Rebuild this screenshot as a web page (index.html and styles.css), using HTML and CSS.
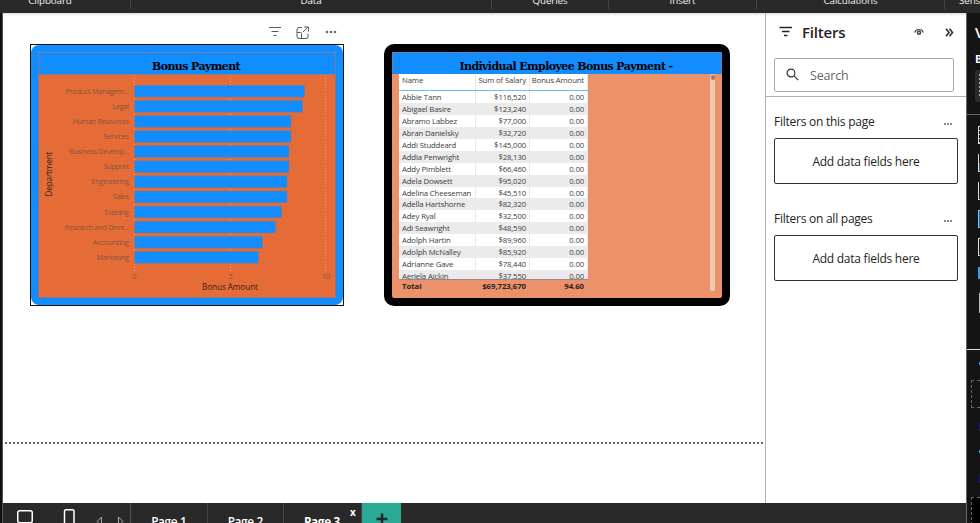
FILE: index.html
```html
<!DOCTYPE html>
<html lang="en">
<head>
<meta charset="utf-8">
<title>Report editor</title>
<link rel="stylesheet" href="styles.css">
</head>
<body>
<div class="app">
  <header class="ribbon">
    <span class="group clipboard">Clipboard</span><span class="group data">Data</span><span class="group queries">Queries</span><span class="group insert">Insert</span><span class="group calc">Calculations</span><span class="group sens">Sensitivity</span>
  </header>
  <div class="workspace">
    <div class="rail"></div>
    <div class="center">
      <div class="stage">
        <main class="canvas">
          <div class="visual-actions">
            <svg width="70" height="16" viewBox="0 0 70 16" fill="none" stroke="#5a5a5a">
              <path d="M1 3.5h12M3.5 7.5h7M5.5 11.5h3"/>
              <path d="M34 3.5h-3a2 2 0 0 0-2 2v7a2 2 0 0 0 2 2h7a2 2 0 0 0 2-2v-3M29 8.500h3.500a1 1 0 0 1 1 1v5M35 8l5-5M36 3h4.500v4.500"/>
              <g fill="#666" stroke="none"><circle cx="59" cy="8" r="1.300"/><circle cx="63" cy="8" r="1.300"/><circle cx="67" cy="8" r="1.300"/></g>
            </svg>
          </div>
          <div class="visuals">
            <section class="visual selected">
              <div class="card">
                <h2>Bonus Payment</h2>
                <svg class="chart" width="296" height="222" viewBox="39 75 296 222">
                  <g class="grid"><path d="M134.500 78V272M230.500 78V272M325.500 78V272"/></g>
                  <g class="bars">
                    <rect x="134.500" y="85.3" width="170" height="11.800"/>
                    <rect x="134.500" y="100.400" width="168" height="11.800"/>
                    <rect x="134.500" y="115.500" width="156.500" height="11.800"/>
                    <rect x="134.500" y="130.600" width="156.500" height="11.800"/>
                    <rect x="134.500" y="145.700" width="154.500" height="11.800"/>
                    <rect x="134.500" y="160.800" width="154.500" height="11.800"/>
                    <rect x="134.500" y="175.900" width="152.500" height="11.800"/>
                    <rect x="134.500" y="191" width="152.500" height="11.800"/>
                    <rect x="134.500" y="206.100" width="147" height="11.800"/>
                    <rect x="134.500" y="221.200" width="141" height="11.800"/>
                    <rect x="134.500" y="236.300" width="128" height="11.800"/>
                    <rect x="134.500" y="251.400" width="124" height="11.800"/>
                  </g>
                  <g class="labels">
                    <text x="129" y="94" textLength="63.500">Product Managem...</text>
                    <text x="129" y="109" textLength="16.500">Legal</text>
                    <text x="129" y="124" textLength="56.500">Human Resources</text>
                    <text x="129" y="139" textLength="25.500">Services</text>
                    <text x="129" y="154" textLength="60">Business Develop...</text>
                    <text x="129" y="169" textLength="25.500">Support</text>
                    <text x="129" y="184" textLength="37.500">Engineering</text>
                    <text x="129" y="199" textLength="16">Sales</text>
                    <text x="129" y="215" textLength="25">Training</text>
                    <text x="129" y="230" textLength="64.500">Research and Deve...</text>
                    <text x="129" y="245" textLength="36">Accounting</text>
                    <text x="129" y="260" textLength="32.500">Marketing</text>
                  </g>
                  <g class="ticks"><text x="134.500" y="279">0</text><text x="230.500" y="279">5</text><text x="326" y="279">10</text></g>
                  <g class="axis"><text x="230" y="290" textLength="56">Bonus Amount</text><text transform="translate(52 174) rotate(-90)" textLength="45">Department</text></g>
                </svg>
              </div>
            </section>
            <section class="visual table-visual">
              <h2>Individual Employee Bonus Payment -</h2>
              <div class="table-body">
                <div class="table">
                  <div class="row head"><span>Name</span><span>Sum of Salary</span><span>Bonus Amount</span></div>
                  <div class="rows">
                    <div class="row"><span>Abbie Tann</span><span>$116,520</span><span>0.00</span></div>
                    <div class="row"><span>Abigael Basire</span><span>$123,240</span><span>0.00</span></div>
                    <div class="row"><span>Abramo Labbez</span><span>$77,000</span><span>0.00</span></div>
                    <div class="row"><span>Abran Danielsky</span><span>$32,720</span><span>0.00</span></div>
                    <div class="row"><span>Addi Studdeard</span><span>$145,000</span><span>0.00</span></div>
                    <div class="row"><span>Addia Penwright</span><span>$28,130</span><span>0.00</span></div>
                    <div class="row"><span>Addy Pimblett</span><span>$66,460</span><span>0.00</span></div>
                    <div class="row"><span>Adela Dowsett</span><span>$95,020</span><span>0.00</span></div>
                    <div class="row"><span>Adelina Cheeseman</span><span>$45,510</span><span>0.00</span></div>
                    <div class="row"><span>Adella Hartshorne</span><span>$82,320</span><span>0.00</span></div>
                    <div class="row"><span>Adey Ryal</span><span>$32,500</span><span>0.00</span></div>
                    <div class="row"><span>Adi Seawright</span><span>$48,590</span><span>0.00</span></div>
                    <div class="row"><span>Adolph Hartin</span><span>$89,960</span><span>0.00</span></div>
                    <div class="row"><span>Adolph McNalley</span><span>$85,920</span><span>0.00</span></div>
                    <div class="row"><span>Adrianne Gave</span><span>$78,440</span><span>0.00</span></div>
                    <div class="row"><span>Aeriela Aickin</span><span>$37,550</span><span>0.00</span></div>
                  </div>
                  <div class="row total"><span>Total</span><span>$69,723,670</span><span>94.60</span></div>
                </div>
                <div class="scrollbar"><div class="thumb"></div></div>
              </div>
            </section>
          </div>
          <div class="page-edge"></div>
        </main>
        <aside class="filters">
          <div class="filters-top">
            <div class="filters-title">
              <svg width="14" height="12" viewBox="0 0 14 12" fill="none" stroke="#252423" stroke-width="1.300"><path d="M.5 1.500h12.500M3 5.500h7.500M5 9.500h3.500"/></svg>
              <h3>Filters</h3>
              <svg class="eye" width="10" height="8" viewBox="0 0 10 8" fill="none" stroke="#444" stroke-width="1.100"><path d="M.6 4.500C2 .4 8 .4 9.400 4.500"/><circle cx="5" cy="4.800" r="1.500" stroke-width="1.500"/></svg>
              <svg class="collapse" width="9" height="9" viewBox="0 0 9 9" fill="none" stroke="#333" stroke-width="1.700"><path d="M1 .8l3 3.700-3 3.700M4.500 .8l3 3.700-3 3.700"/></svg>
            </div>
            <div class="search">
              <svg width="13" height="13" viewBox="0 0 13 13" fill="none" stroke="#333" stroke-width="1.200"><circle cx="5" cy="5" r="3.900"/><path d="M7.900 7.900l4.300 4.300"/></svg>
              <span>Search</span>
            </div>
          </div>
          <div class="well-head"><span class="this-page">Filters on this page</span><i class="dots"></i></div>
          <div class="well"><span>Add data fields here</span></div>
          <div class="well-head second"><span class="all-pages">Filters on all pages</span><i class="dots"></i></div>
          <div class="well"><span>Add data fields here</span></div>
        </aside>
      </div>
      <footer class="tabs">
        <div class="view-tools">
          <svg width="127" height="20" viewBox="3 503 127 20" fill="none" stroke="#fff" stroke-width="1.500"><rect x="17.750" y="510.750" width="14.500" height="12" rx="2"/><rect x="64.500" y="509.750" width="9.500" height="16" rx="1.500"/><path d="M101.500 517v9l-4.500-4.500zM118.500 517v9l4.500-4.500z" stroke="#aaa" stroke-width="1"/></svg>
        </div>
        <div class="tab">Page 1</div><div class="tab">Page 2</div><div class="tab active">Page 3<span class="close">x</span></div>
        <div class="add"><svg width="12" height="12" viewBox="0 0 12 12" stroke="#252525" stroke-width="2.500"><path d="M6 .5v11M.5 6h11"/></svg></div>
      </footer>
    </div>
    <aside class="visualizations">
      <div class="viz-title">Visualizations</div>
      <div class="viz-sub">Build visual</div>
      <div class="tile"></div>
      <div class="gallery"><i class="lined"></i><i class="half"></i><i class="open"></i><i class="blue"></i><i></i></div>
      <div class="solid"></div>
      <div class="bar-icon"></div>
      <div class="fields"><b class="mark one"></b><div class="drop"></div><b class="mark two"></b><b class="mark three"></b><b class="mark four"></b><div class="drop dark"></div></div>
    </aside>
  </div>
</div>
</body>
</html>
```
FILE: styles.css
```css
* { box-sizing: border-box; }
body { margin: 0; background: #fff; font-family: "Open Sans", "Noto Sans", sans-serif; color: #252423; }
h2, h3 { margin: 0; }
svg { display: block; flex: none; }
.app { width: 980px; height: 523px; overflow: hidden; }

.ribbon { display: flex; height: 13px; background: #292929; overflow: hidden; }
.group { flex: none; height: 9px; border-right: 1px solid #444; color: #f3f3f3; font-size: 9.800px; line-height: 2px; letter-spacing: -.1px; text-align: center; white-space: nowrap; }
.clipboard { width: 131px; padding-right: 30px; }
.data { width: 361px; }
.queries { width: 117px; }
.insert { width: 148px; }
.calc { width: 188px; }
.sens { width: 80px; padding-left: 14px; text-align: left; }

.workspace { display: flex; height: 510px; }
.rail { width: 3px; background: #111; border-right: 1px solid #555; }
.center { width: 963px; }
.stage { display: flex; height: 490px; }

.canvas { width: 762px; background: linear-gradient(#ddd, #fff 3px); overflow: hidden; }
.visual-actions { height: 31px; padding: 11px 0 0 265px; }
.visuals { display: flex; gap: 40px; padding-left: 27px; }
.visual { height: 262px; }
.visual h2 { height: 22px; background: #118dff; color: #000; font: bold 11px/28px "DejaVu Serif", serif; text-align: center; letter-spacing: -.6px; white-space: nowrap; }
.selected { width: 314px; border: 1px solid #111; }
.card { display: flex; flex-direction: column; height: 260px; padding: 7px; border-radius: 8px; background: #118dff; }
.card h2 { width: 298px; height: 23px; padding-left: 18px; border: 1px solid #737f9e; border-bottom-color: #837f90; line-height: 27px; }
.chart { width: 298px; height: 223px; background: #e66c37; border: 1px solid #8b7784; border-top: 0; }
.grid path { fill: none; stroke: #f0a17e; stroke-dasharray: 1 2; }
.bars rect { fill: #118dff; stroke: #8b7784; stroke-width: .6; }
.labels text { font-size: 7.200px; fill: #85553f; text-anchor: end; }
.ticks text { font-size: 7px; fill: #85553f; text-anchor: middle; }
.axis text { font-size: 8.200px; fill: #33241d; text-anchor: middle; }

.table-visual { width: 346px; border: 8px solid #000; border-radius: 10px; background: #eb926a; }
.table-visual h2 { padding-left: 18px; border: 1px solid #5b86b8; border-width: 1px 1px 0; line-height: 27px; }
.table-body { display: flex; justify-content: space-between; height: 224px; padding: 0 7px 0 7px; }
.table { width: 189px; font-size: 7.750px; letter-spacing: -.14px; color: #3d3c3b; }
.row { display: grid; grid-template-columns: 77px 54px 58px; height: 11.950px; line-height: 12.500px; background: #fff; white-space: nowrap; }
.row span { padding: 0 3px; text-align: right; border-right: 1px solid #f5e5df; }
.row span:nth-child(2), .row span:nth-child(3) { padding-left: 0; }
.row span:first-child { text-align: left; }
.rows { height: 189px; overflow: hidden; border-bottom: 1px solid #99839a; }
.rows .row:nth-child(even) { background: #ebebeb; }
.head { height: 17px; line-height: 13px; border-bottom: 1px solid #70bbff; }
.total { background: none; font-weight: bold; letter-spacing: -.05px; line-height: 13px; color: #2d211b; }
.total span { border-color: transparent; }
.scrollbar { width: 5px; height: 217px; padding: 1px .5px; border-radius: 2px; background: #f5c8b4; }
.thumb { height: 5px; border-radius: 2px; background: #a97560; }
.page-edge { height: 2px; margin: 136px 1px 0 2px; background: repeating-linear-gradient(90deg, #666 0 2px, transparent 2px 4px); }

.filters { width: 201px; border-left: 1px solid #b3b0ad; background: linear-gradient(#ddd, #fff 3px); }
.filters-top { height: 84px; padding: 8px 12px 0 8px; border-bottom: 1px solid #b3b0ad; }
.filters-title { display: flex; align-items: center; height: 22px; padding-left: 5px; }
h3 { width: 118px; margin-left: 9px; font-size: 15px; line-height: 20px; font-weight: 600; letter-spacing: -.2px; }
.eye { margin-left: 4px; }
.collapse { margin-left: 21px; }
.search { display: flex; align-items: center; gap: 11px; height: 34px; margin-top: 15px; padding-left: 11px; border: 1px solid #aaa; border-radius: 2px; color: #666; font-size: 12.500px; letter-spacing: -.2px; }
.search svg { margin-top: -2px; }
.well-head { display: flex; justify-content: space-between; align-items: center; height: 20px; margin: 14px 14px 0 8px; font-size: 12px; letter-spacing: -.25px; }
.second { margin-top: 24px; }
.dots { width: 8px; height: 2px; margin-top: 5px; background: repeating-linear-gradient(90deg, #888 0 2px, transparent 2px 3px); }
.well { display: flex; align-items: center; justify-content: center; width: 184px; height: 46px; margin: 7px 0 0 8px; border: 1px solid #333; border-radius: 2px; font-size: 12px; letter-spacing: -.25px; }

.tabs { display: flex; height: 20px; overflow: hidden; background: #292929; color: #fff; }
.view-tools { width: 128px; border-right: 1px solid #555; }
.tab { width: 76.500px; border-right: 1px solid #444; font-size: 11.800px; line-height: 37px; font-weight: 600; text-align: center; letter-spacing: -.35px; white-space: nowrap; }
.active { display: flex; width: 78px; padding-left: 20px; font-weight: 700; }
.close { margin: 1px 0 0 10px; font-size: 10px; line-height: 17px; }
.add { display: flex; justify-content: center; width: 39px; padding-top: 10px; background: #2aaa94; }

.visualizations { width: 14px; overflow: hidden; border-left: 1px solid #666; background: #141414; color: #fff; white-space: nowrap; }
.viz-title { height: 34px; padding: 8px 0 0 8px; font-size: 15px; line-height: 22px; font-weight: 600; }
.viz-sub { height: 23px; padding-left: 8px; font-size: 11px; line-height: 23px; font-weight: 700; }
.tile { height: 32px; margin-left: 8px; border-radius: 2px 0 0 2px; background: #2b2b2b; }
.tile::before { content: ""; display: block; width: 1px; height: 24px; margin-left: 4px; background: repeating-linear-gradient(#aaa 0 2px, transparent 2px 4px); transform: translateY(4px); }
.gallery { display: flex; flex-direction: column; gap: 10px; height: 153px; margin-top: 12px; padding: 11px 0 0 11px; border-top: 1px solid #666; }
.gallery i { flex: none; width: 16px; height: 18px; border: 1px solid #ddd; }
.gallery .lined { background: repeating-linear-gradient(transparent 0 3px, #ccc 3px 4px); }
.gallery .half { background: linear-gradient(transparent 50%, #456 50%); border-top: 0; }
.gallery .open { border-top: 0; }
.gallery .blue { background: #1664ab; border-color: #7fc4ff; }
.solid { height: 12px; margin-left: 11px; background: #3c9be5; }
.bar-icon { height: 20px; margin: 14px 0 0 12px; background: #bbb; }
.fields { height: 174px; margin-top: 36px; border-top: 1px solid #ddd; }
.drop { height: 28px; margin: 15px 0 0 4px; border: 1px dashed #666; border-right: 0; }
.mark { display: block; height: 3px; margin: 12px 0 0 12px; background: #4b91ea; }
.two { height: 9px; margin-top: 14px; background: #18108a; }
.three { margin-top: 19px; background: #29a6c9; }
.four { height: 9px; margin-top: 21px; background: #18108a; }
.dark { margin-top: 14px; background: #000; }
```
